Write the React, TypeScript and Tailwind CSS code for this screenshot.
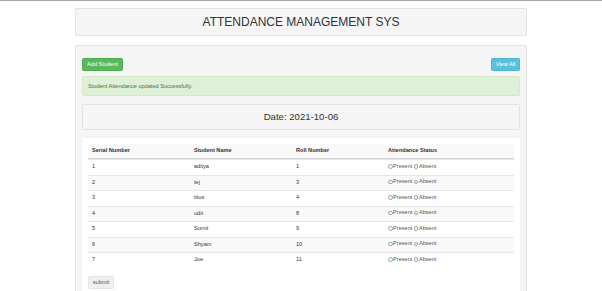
import React from "react";

const rows: [number, string, number][] = [
  [1, "aditya", 1],
  [2, "tej", 3],
  [3, "titus", 4],
  [4, "udit", 8],
  [5, "Sumit", 9],
  [6, "Shyam", 10],
  [7, "Joe", 11],
];

function Radio({ label }: { label: string }) {
  return (
    <span className="inline-flex items-center">
      <span className="inline-block w-[4.5px] h-[4.5px] rounded-full border-[0.6px] border-[#a0a0a0] bg-white mr-[0.6px]" />
      <span>{label}</span>
    </span>
  );
}

export default function App() {
  return (
    <div className="min-h-[291px] bg-white text-[#333] font-['Liberation_Sans',Arial,sans-serif] overflow-hidden">
      <div className="h-[1px] bg-[#a6a6a6]" />
      <div className="mx-auto mt-[7px] w-[452px] h-[28px] flex items-center justify-center bg-[#f5f5f5] border border-[#e3e3e3] rounded-[2px] text-[12px] leading-none">
        ATTENDANCE MANAGEMENT SYS
      </div>
      <div className="mx-auto mt-[9px] w-[452px] bg-[#f5f5f5] border border-[#e3e3e3] rounded-[2px] px-[6px] pt-[12px] pb-[8px]">
        <div className="flex justify-between h-[13px]">
          <div className="w-[41px] h-[13px] bg-[#5cb85c] border border-[#4cae4c] rounded-[1.6px] text-white text-[5.6px] flex items-center justify-center">
            Add Student
          </div>
          <div className="w-[29px] h-[13px] bg-[#5bc0de] border border-[#46b8da] rounded-[1.6px] text-white text-[5.6px] flex items-center justify-center">
            View All
          </div>
        </div>
        <div className="mt-[5px] h-[20px] bg-[#dff0d8] border border-[#d6e9c6] rounded-[1.6px] text-[#3c763d] text-[5.6px] px-[5px] flex items-center">
          Student Attendance updated Successfully.
        </div>
        <div className="mt-[8px] h-[26px] bg-[#f5f5f5] border border-[#e3e3e3] rounded-[1.6px] flex items-center justify-center text-[9.6px] leading-none">
          Date: 2021-10-06
        </div>
        <div className="mt-[8px] bg-white px-[6px] pt-[6px] pb-[10px]">
          <div className="text-[5.6px] leading-none">
            <div className="grid grid-cols-[102px_102px_92px_1fr] items-center h-[15px] bg-[#f9f9f9] border-b border-[#d5d5d5] font-bold">
              <div className="px-[4px]">Serial Number</div>
              <div className="px-[4px]">Student Name</div>
              <div className="px-[4px]">Roll Number</div>
              <div className="px-[4px]">Attendance Status</div>
            </div>
            {rows.map(([s, n, r], i) => (
              <div
                key={s}
                className={
                  "grid grid-cols-[102px_102px_92px_1fr] items-center h-[15.5px] border-t border-[#e6e6e6] " +
                  (i % 2 === 1 ? "bg-[#f9f9f9]" : "bg-white")
                }
              >
                <div className="px-[4px]">{s}</div>
                <div className="px-[4px]">{n}</div>
                <div className="px-[4px]">{r}</div>
                <div className="px-[4px] text-[#555]">
                  <span className="inline-flex items-center gap-[1.5px]">
                    <Radio label="Present" />
                    <Radio label="Absent" />
                  </span>
                </div>
              </div>
            ))}
          </div>
          <div className="mt-[8px] w-[26px] h-[13px] bg-[#efefef] border border-[#e4e4e4] rounded-[1.6px] text-[5.6px] text-[#555] flex items-center justify-center">
            submit
          </div>
        </div>
      </div>
    </div>
  );
}
